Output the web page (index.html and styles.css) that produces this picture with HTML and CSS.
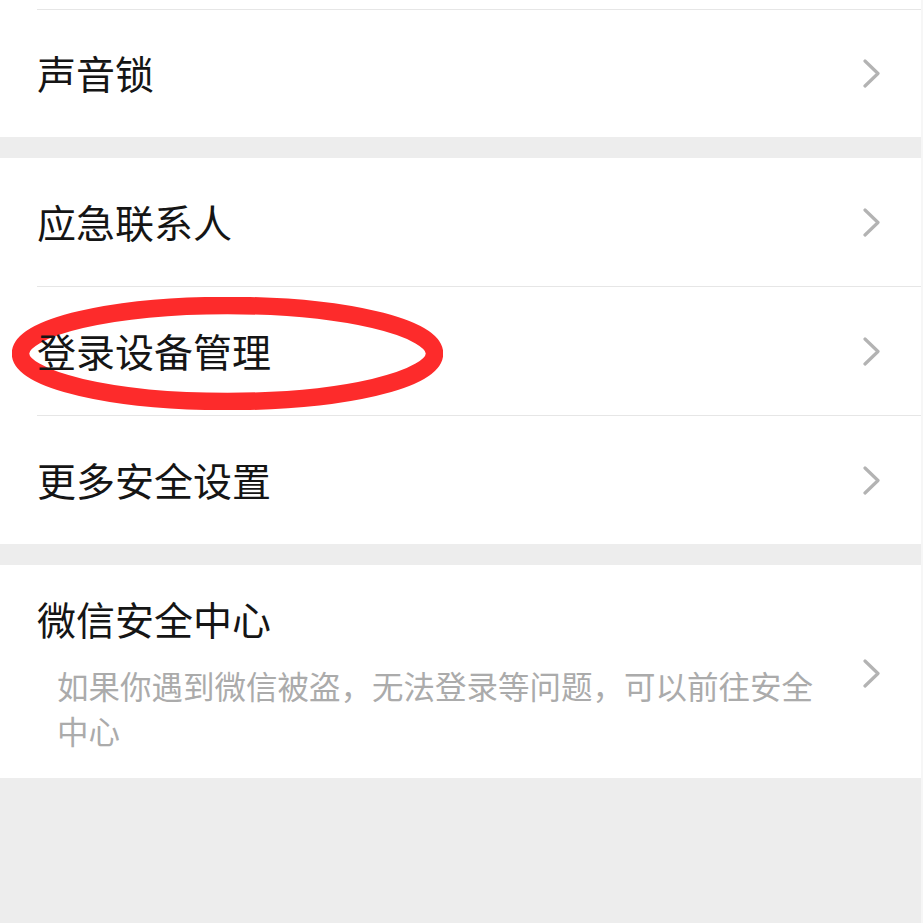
FILE: index.html
```html
<!DOCTYPE html>
<html>
<head>
    <title>账号与安全</title>
    <link rel="stylesheet" href="styles.css">
</head>
<body>
    <div class="page">
        <div class="group">
            <div class="stub"></div>
            <div class="cell line">
                <span class="title">声音锁</span>
                <svg class="arrow" viewBox="0 0 17 29"><polyline points="2,2 15,14.5 2,27"/></svg>
            </div>
        </div>

        <div class="group">
            <div class="cell">
                <span class="title">应急联系人</span>
                <svg class="arrow" viewBox="0 0 17 29"><polyline points="2,2 15,14.5 2,27"/></svg>
            </div>
            <div class="cell line marked">
                <svg class="circle" viewBox="0 0 431 113">
                    <ellipse cx="215.5" cy="56.5" rx="207" ry="48"/>
                </svg>
                <span class="title">登录设备管理</span>
                <svg class="arrow" viewBox="0 0 17 29"><polyline points="2,2 15,14.5 2,27"/></svg>
            </div>
            <div class="cell line">
                <span class="title">更多安全设置</span>
                <svg class="arrow" viewBox="0 0 17 29"><polyline points="2,2 15,14.5 2,27"/></svg>
            </div>
        </div>

        <div class="group">
            <div class="cell tall">
                <div class="text">
                    <div class="title">微信安全中心</div>
                    <div class="desc">如果你遇到微信被盗，无法登录等问题，可以前往安全中心</div>
                </div>
                <svg class="arrow" viewBox="0 0 17 29"><polyline points="2,2 15,14.5 2,27"/></svg>
            </div>
        </div>
    </div>
</body>
</html>
```

FILE: styles.css
```css
html, body {
    margin: 0;
    padding: 0;
    background: #ededed;
}

body {
    font-family: "Noto Sans CJK SC", "Noto Sans", sans-serif;
    color: #151515;
}

.page {
    display: flex;
    flex-direction: column;
    gap: 21px;
    height: 923px;
    border-right: 2px solid #f6f6f6;
}

.group {
    background: #fff;
}

.stub {
    height: 9px;
}

.cell {
    position: relative;
    display: flex;
    align-items: center;
    justify-content: space-between;
    height: 128px;
    margin-left: 37px;
    padding-right: 41px;
}

.cell.line {
    border-top: 1px solid #e6e6e6;
}

.group:first-child .cell.line {
    height: 127px;
}

.title {
    position: relative;
    z-index: 1;
    font-size: 39px;
    line-height: 50px;
    margin-top: -3px;
}

.arrow {
    width: 17px;
    height: 29px;
    flex: none;
}

.arrow polyline {
    fill: none;
    stroke: #b3b3b3;
    stroke-width: 3.2;
    stroke-linecap: round;
    stroke-linejoin: round;
}

.circle {
    position: absolute;
    left: -25px;
    top: 10px;
    width: 431px;
    height: 113px;
}

.circle ellipse {
    fill: none;
    stroke: #fd2b2b;
    stroke-width: 17.5;
}

.cell.tall {
    height: auto;
    padding-top: 28px;
    padding-bottom: 25px;
}

.cell.tall .title {
    margin-top: 0;
}

.desc {
    margin-top: 20px;
    margin-left: 20px;
    width: 785px;
    font-size: 31.5px;
    line-height: 45px;
    color: #ababab;
}
```
